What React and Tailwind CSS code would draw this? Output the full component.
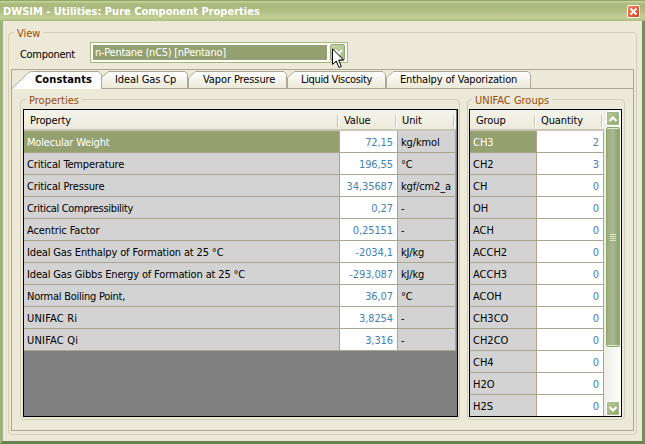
import React from "react";

const properties = [
  ["Molecular Weight", "72,15", "kg/kmol", "tracking-[-0.2px]"],
  ["Critical Temperature", "196,55", "°C", "tracking-[-0.15px]"],
  ["Critical Pressure", "34,35687", "kgf/cm2_a", "tracking-[-0.15px]"],
  ["Critical Compressibility", "0,27", "-", "tracking-[-0.33px]"],
  ["Acentric Factor", "0,25151", "-", "tracking-[-0.1px]"],
  ["Ideal Gas Enthalpy of Formation at 25 °C", "-2034,1", "kJ/kg", "tracking-[-0.15px]"],
  ["Ideal Gas Gibbs Energy of Formation at 25 °C", "-293,087", "kJ/kg", "tracking-[-0.15px]"],
  ["Normal Boiling Point,", "36,07", "°C", "tracking-[-0.25px]"],
  ["UNIFAC Ri", "3,8254", "-", "tracking-[0.2px]"],
  ["UNIFAC Qi", "3,316", "-", "tracking-[0.2px]"],
];

const groups = [
  ["CH3", 2], ["CH2", 3], ["CH", 0], ["OH", 0], ["ACH", 0], ["ACCH2", 0], ["ACCH3", 0],
  ["ACOH", 0], ["CH3CO", 0], ["CH2CO", 0], ["CH4", 0], ["H2O", 0], ["H2S", 0],
];

const tabs = [
  ["Ideal Gas Cp", 87, "pl-[14px] tracking-[-0.1px]"],
  ["Vapor Pressure", 99, "pl-[15px] tracking-[-0.1px]"],
  ["Liquid Viscosity", 99, "pl-[14px] tracking-[-0.35px]"],
  ["Enthalpy of Vaporization", 145, "pl-[14px] tracking-[-0.15px]"],
];

function GroupBox({ title, className, children }) {
  return (
    <section className={"flex flex-col rounded-[4px] border border-[#d0cfba] " + className}>
      <h2 className="-mt-[8px] ml-[3px] h-[16px] self-start bg-[#ece9d8] px-[3px] leading-[17px] text-[#964b0c]">
        {title}
      </h2>
      {children}
    </section>
  );
}

function HeaderCell({ pad = "pl-[6px]", children }) {
  return (
    <div className={"flex h-[21px] items-center border-b-2 border-[#cbc7b8] bg-linear-to-b from-[#f5f4ea] to-[#ebeadb] pt-[3px] " + pad}>
      <span className="flex-1 tracking-[-0.1px]">{children}</span>
      <span className="mr-px h-[12px] w-[2px] border-r border-l border-r-white border-l-[#c7c5b2]" />
    </div>
  );
}

function InactiveTab({ label, width, pad }) {
  const d = `M0.5 17V6.5L7.5 0.5H${width - 3}L${width - 0.5} 3.5V17`;
  return (
    <div className={"relative h-[17px] shrink-0 leading-[17px] " + pad} style={{ width }}>
      <svg className="absolute top-0 left-0" width={width + 1} height="17">
        <defs>
          <linearGradient id="tabFill" x1="0" y1="0" x2="0" y2="1">
            <stop offset="0" stopColor="#fff" />
            <stop offset="1" stopColor="#ece9d8" />
          </linearGradient>
        </defs>
        <path d={d} fill="url(#tabFill)" stroke="#aca899" />
      </svg>
      <span className="relative">{label}</span>
    </div>
  );
}

function ScrollButton({ up }) {
  return (
    <div className="flex h-[15px] w-[14px] items-center justify-center rounded-[2px] border border-white bg-linear-to-br from-[#b9cc9b] to-[#8ca568] outline outline-[#a5b98a] -outline-offset-2">
      <svg width="10" height="8">
        <path d={up ? "M1.5 6L5 2.5L8.5 6" : "M1.5 2L5 5.5L8.5 2"} fill="none" stroke="#fff" strokeWidth="2.2" />
      </svg>
    </div>
  );
}

export default function App() {
  return (
    <main className="flex h-[444px] w-[645px] flex-col overflow-hidden bg-[#ece9d8] font-['DejaVu_Sans_Condensed','DejaVu_Sans',sans-serif] text-[11px] whitespace-nowrap text-black">
      <header className="flex h-[21px] shrink-0 items-center justify-between border-t border-[#8fa767] bg-[linear-gradient(#c9d59e_0px,#a9b97d_3px,#adbd80_9px,#c4cf98_17px,#acba7c_20px)] pr-[5px] pl-[3px]">
        <h1 className="pt-[2px] text-[11px] font-bold text-white">
          DWSIM - Utilities: Pure Component Properties
        </h1>
        <button className="flex h-[13px] w-[13px] items-center justify-center rounded-[2px] border border-white bg-linear-to-br from-[#ee8060] to-[#d8401a]" aria-label="Close">
          <svg width="9" height="9"><path d="M1.5 1.5L7.5 7.5M7.5 1.5L1.5 7.5" stroke="#fff" strokeWidth="1.8" /></svg>
        </button>
      </header>
      <div className="flex flex-1 border-x-[3px] border-b-[3px] border-r-[#6f8f55] border-b-[#66854d] border-l-[#9db27a] px-[5px] pt-[11px] pb-[6px]">
        <GroupBox title="View" className="w-[629px] px-[2px] pb-[3px]">
          <div className="mt-px flex h-[21px] shrink-0 items-center">
            <label className="w-[79px] pt-[5px] pl-[9px] tracking-[-0.3px]">Component</label>
            <div className="flex h-[21px] w-[258px] border border-[#a3bc78] bg-white p-[2px]">
              <div className="h-[15px] w-[235px] bg-[#94a070] pl-[2px] leading-[16px] tracking-[-0.27px] text-white">
                n-Pentane (nC5) [nPentano]
              </div>
              <div className="relative -my-px ml-[3px] h-[17px] w-[15px] rounded-[2px] border border-[#8fa873] bg-linear-to-br from-[#c8d8ad] to-[#a4bb82]">
                <svg className="absolute top-[4px] left-[3px]" width="10" height="8"><path d="M1 1L4.5 5L8 1" fill="none" stroke="#fff" strokeWidth="2" /></svg>
                <svg className="absolute top-[3px] left-[1px]" width="13" height="22">
                  <path d="M0.5 0.8V16.5L4.2 13L7 19.5L9.3 18.5L6.7 12H11.5Z" fill="#fff" stroke="#000" />
                </svg>
              </div>
            </div>
          </div>
          <div className="mt-[6px] flex min-h-0 flex-1 flex-col border border-[#aca899]">
            <nav className="flex h-[19px] shrink-0 items-end border-b border-[#aca899] pt-[2px]">
              <div className="relative -mb-px h-[18px] w-[89px] pl-[23px] leading-[18px] font-bold">
                <svg className="absolute top-0 left-0" width="90" height="18">
                  <path d="M0 17.5L15.5 2.5Q17.5 0.5 20.5 0.5H86L89.5 3.5V17.5" fill="#fff" stroke="#aca899" />
                  <path d="M1 17.5H89" stroke="#fff" />
                </svg>
                <span className="relative tracking-[0.1px]">Constants</span>
              </div>
              {tabs.map(([label, width, pad]) => (
                <InactiveTab key={label} label={label} width={width} pad={pad} />
              ))}
            </nav>
            <div className="flex flex-1 items-start gap-[7px] pt-[10px] pl-[8px]">
              <GroupBox title="Properties" className="h-[321px] w-[440px] px-[2px]">
                <div className="mt-px h-[308px] w-[435px] overflow-hidden border border-black bg-[#808080]">
                  <div className="grid w-[432px] grid-cols-[316px_58px_58px]">
                    <HeaderCell>Property</HeaderCell>
                    <HeaderCell pad="pl-[4px]">Value</HeaderCell>
                    <HeaderCell pad="pl-[4px]">Unit</HeaderCell>
                    {properties.map(([name, value, unit, tracking], i) => (
                      <React.Fragment key={name}>
                        <div className={"h-[22px] border-r border-b border-[#aca68f] pl-[3px] leading-[23px] " + tracking + (i === 0 ? " bg-[#94a070] text-white" : " bg-[#d3d3d3]")}>{name}</div>
                        <div className="h-[22px] border-r border-b border-[#aca68f] bg-white pr-[4px] text-right leading-[23px] tracking-[-0.1px] text-[#4682b4]">{value}</div>
                        <div className="h-[22px] border-r border-b border-[#aca68f] bg-[#d3d3d3] pl-[3px] leading-[23px] tracking-[-0.15px]">{unit}</div>
                      </React.Fragment>
                    ))}
                  </div>
                </div>
              </GroupBox>
              <GroupBox title="UNIFAC Groups" className="h-[321px] w-[158px] px-px">
                <div className="mt-px flex h-[308px] w-[153px] overflow-hidden border border-black bg-white">
                  <div className="grid w-[134px] shrink-0 auto-rows-max grid-cols-[67px_67px]">
                    <HeaderCell>Group</HeaderCell>
                    <HeaderCell pad="pl-[4px]">Quantity</HeaderCell>
                    {groups.map(([name, quantity], i) => (
                      <React.Fragment key={name}>
                        <div className={"h-[22px] border-r border-b border-[#aca68f] pl-[3px] leading-[23px] " + (i === 0 ? "bg-[#94a070] text-white" : "bg-[#d3d3d3]")}>{name}</div>
                        <div className="h-[22px] border-r border-b border-[#aca68f] bg-white pr-[4px] text-right leading-[23px] text-[#4682b4]">{quantity}</div>
                      </React.Fragment>
                    ))}
                  </div>
                  <div className="flex flex-1 flex-col items-center justify-between bg-linear-to-r from-[#eeeee6] to-[#fdfdfb] pt-px">
                    <div className="flex flex-col items-center gap-px">
                      <ScrollButton up />
                      <div className="flex h-[220px] w-[14px] flex-col items-center justify-center gap-px rounded-[2px] border border-[#8fa56c] bg-linear-to-r from-[#9bae7d] via-[#a9b990] to-[#8ba368] shadow-[inset_0_1px_#e3ead4,inset_0_-1px_#e3ead4]">
                        <i className="h-px w-[6px] bg-[#dbe6c4]" />
                        <i className="h-px w-[6px] bg-[#dbe6c4]" />
                        <i className="h-px w-[6px] bg-[#dbe6c4]" />
                        <i className="h-px w-[6px] bg-[#dbe6c4]" />
                      </div>
                    </div>
                    <ScrollButton />
                  </div>
                </div>
              </GroupBox>
            </div>
          </div>
        </GroupBox>
      </div>
    </main>
  );
}
